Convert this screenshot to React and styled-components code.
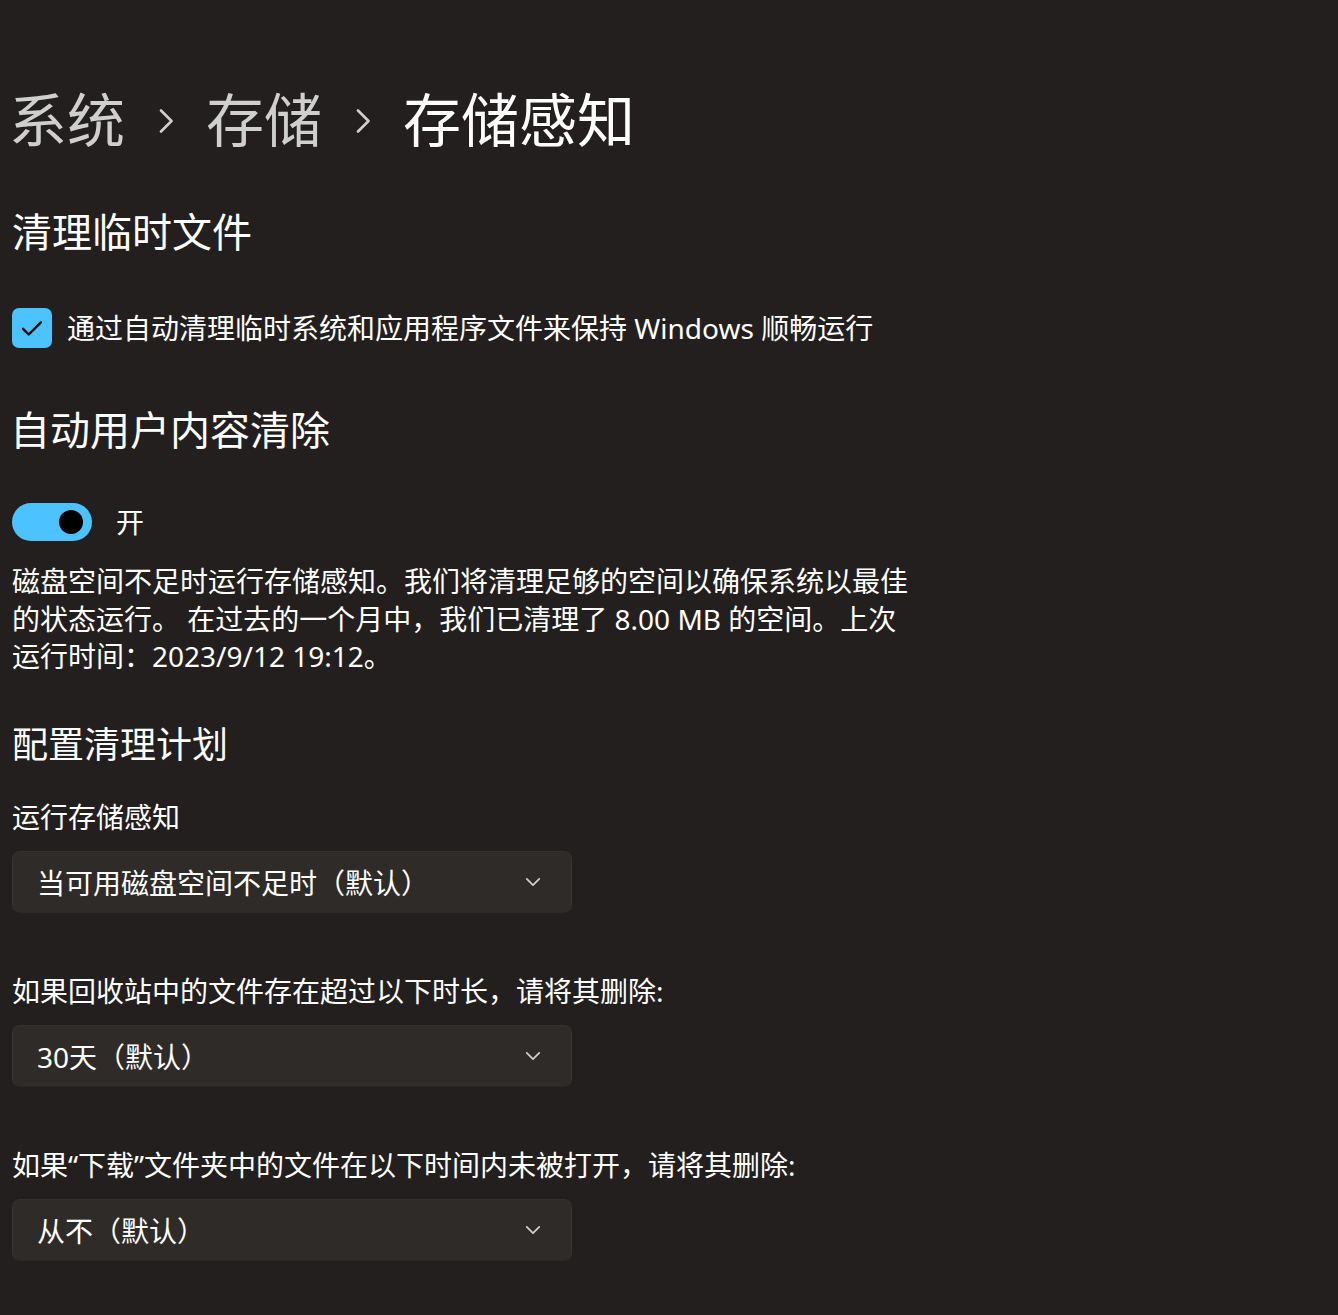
import React from "react"
import styled, { createGlobalStyle } from "styled-components"

const GlobalStyle = createGlobalStyle`
  html, body {
    margin: 0;
    padding: 0;
    background: #221f1e;
  }
  body {
    font-family: "Noto Sans", "Noto Sans CJK SC", sans-serif;
    color: #ffffff;
  }
`

export default function App() {
    return <Page>
        <GlobalStyle />
        <Breadcrumb>
            <Crumb>系统</Crumb>
            <Chevron viewBox="0 0 24 24"><path d="M7 1.5 L17.5 12 L7 22.5" /></Chevron>
            <Crumb>存储</Crumb>
            <Chevron viewBox="0 0 24 24"><path d="M7 1.5 L17.5 12 L7 22.5" /></Chevron>
            <Crumb current>存储感知</Crumb>
        </Breadcrumb>

        <Heading top={44}>清理临时文件</Heading>
        <CheckRow>
            <CheckBox>
                <svg width="26" height="26" viewBox="0 0 16 16">
                    <path d="M2.5 8.5 L6 12 L13.5 4.5" fill="none" stroke="#0b0b0b" strokeWidth="1.5" strokeLinecap="round" strokeLinejoin="round" />
                </svg>
            </CheckBox>
            <BodyText>通过自动清理临时系统和应用程序文件来保持 Windows 顺畅运行</BodyText>
        </CheckRow>

        <Heading top={54} left={-2}>自动用户内容清除</Heading>
        <ToggleRow>
            <Toggle><Knob /></Toggle>
            <BodyText>开</BodyText>
        </ToggleRow>
        <Paragraph>
            磁盘空间不足时运行存储感知。我们将清理足够的空间以确保系统以最佳的状态运行。 在过去的一个月中，我们已清理了 8.00 MB 的空间。上次运行时间：2023/9/12 19:12。
        </Paragraph>

        <SubHeading>配置清理计划</SubHeading>

        <Label top={27}>运行存储感知</Label>
        <Dropdown>
            <span>当可用磁盘空间不足时（默认）</span>
            <DropArrow viewBox="0 0 16 16"><path d="M3 5.5 L8 10.5 L13 5.5" /></DropArrow>
        </Dropdown>

        <Label top={58}>如果回收站中的文件存在超过以下时长，请将其删除:</Label>
        <Dropdown>
            <span>30天（默认）</span>
            <DropArrow viewBox="0 0 16 16"><path d="M3 5.5 L8 10.5 L13 5.5" /></DropArrow>
        </Dropdown>

        <Label top={58}>如果“下载”文件夹中的文件在以下时间内未被打开，请将其删除:</Label>
        <Dropdown>
            <span>从不（默认）</span>
            <DropArrow viewBox="0 0 16 16"><path d="M3 5.5 L8 10.5 L13 5.5" /></DropArrow>
        </Dropdown>
    </Page>
}

const Page = styled.div`
    padding: 80px 12px 40px 12px;
    min-height: 1315px;
    box-sizing: border-box;
    background: #221f1e;
`

const Breadcrumb = styled.div`
    display: flex;
    align-items: center;
    height: 80px;
    margin-left: -3px;
`

const Crumb = styled.span`
    font-size: 58px;
    line-height: 80px;
    font-weight: 400;
    color: ${props => (props.current ? "#ffffff" : "#cfcfcf")};
`

const Chevron = styled.svg`
    width: 24px;
    height: 24px;
    margin: 2px 28px 0 29px;
    fill: none;
    stroke: #cfcfcf;
    stroke-width: 2.6;
    stroke-linecap: round;
    stroke-linejoin: round;
`

const Heading = styled.h2`
    margin: ${props => props.top}px 0 0 ${props => props.left || 0}px;
    font-size: 40px;
    line-height: 56px;
    font-weight: 400;
    color: #ffffff;
`

const SubHeading = styled.h3`
    margin: 44px 0 0 0;
    font-size: 36px;
    line-height: 50px;
    font-weight: 400;
    color: #ffffff;
`

const CheckRow = styled.div`
    display: flex;
    align-items: center;
    gap: 15px;
    margin-top: 48px;
    height: 40px;
`

const CheckBox = styled.div`
    width: 40px;
    height: 40px;
    border-radius: 7px;
    background: #4cc2ff;
    display: flex;
    align-items: center;
    justify-content: center;
`

const BodyText = styled.span`
    font-size: 28px;
    line-height: 40px;
    color: #ffffff;
`

const ToggleRow = styled.div`
    display: flex;
    align-items: center;
    gap: 24px;
    margin-top: 45px;
    height: 38px;
`

const Toggle = styled.div`
    width: 80px;
    height: 38px;
    border-radius: 19px;
    background: #4cc2ff;
    display: flex;
    align-items: center;
    justify-content: flex-end;
    padding-right: 9px;
    box-sizing: border-box;
`

const Knob = styled.div`
    width: 24px;
    height: 24px;
    border-radius: 50%;
    background: #000000;
`

const Paragraph = styled.p`
    margin: 22px 0 0 0;
    width: 910px;
    font-size: 28px;
    line-height: 37.5px;
    color: #ffffff;
`

const Label = styled.div`
    margin-top: ${props => props.top}px;
    font-size: 28px;
    line-height: 40px;
    color: #ffffff;
`

const Dropdown = styled.div`
    margin-top: 14px;
    width: 560px;
    height: 62px;
    box-sizing: border-box;
    border-radius: 8px;
    background: #2e2b29;
    border: 1px solid #353230;
    border-bottom-color: #2b2827;
    display: flex;
    align-items: center;
    justify-content: space-between;
    padding: 0 28px 0 24px;
    font-size: 28px;
    color: #ffffff;
`

const DropArrow = styled.svg`
    width: 20px;
    height: 20px;
    fill: none;
    stroke: #cfcfcf;
    stroke-width: 1.4;
    stroke-linecap: round;
    stroke-linejoin: round;
`
